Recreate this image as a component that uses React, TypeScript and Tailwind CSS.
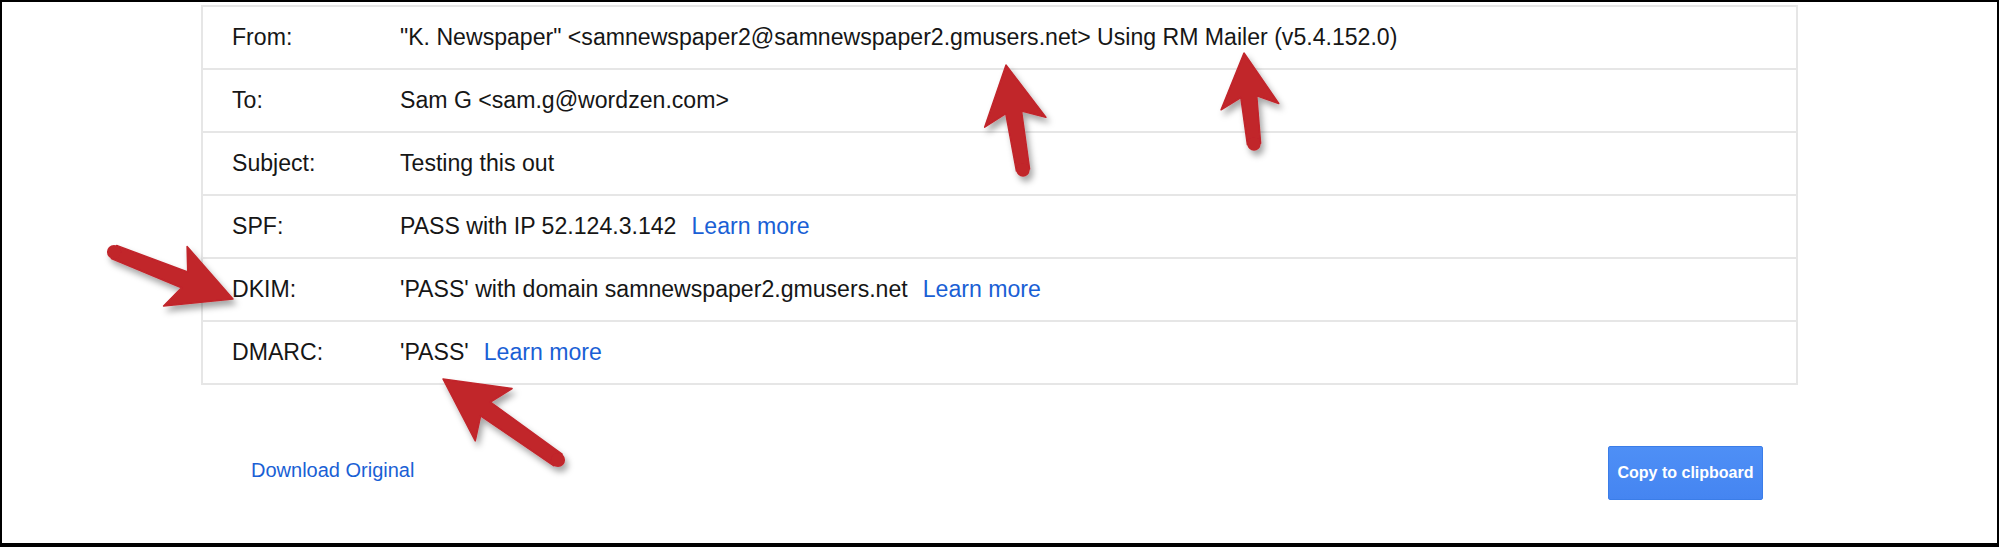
import React from "react";

type Pt = [number, number];

interface ArrowSpec {
  tail: Pt;
  tip: Pt;
  headLen: number;
  headHalf: number;
  shaft: number;
}

// red annotation arrows drawn over the dialog
const arrows: ArrowSpec[] = [
  { tail: [1021, 168], tip: [1004, 63], headLen: 56, headHalf: 31, shaft: 16 },
  { tail: [1252, 142], tip: [1242, 51], headLen: 52, headHalf: 29, shaft: 16 },
  { tail: [112, 250], tip: [231, 297], headLen: 60, headHalf: 32, shaft: 17 },
  { tail: [556, 458], tip: [441, 377], headLen: 60, headHalf: 32, shaft: 17 },
];

function arrowPoints({ tail, tip, headLen, headHalf, shaft }: ArrowSpec) {
  const dx = tip[0] - tail[0];
  const dy = tip[1] - tail[1];
  const len = Math.hypot(dx, dy);
  const ux = dx / len;
  const uy = dy / len;
  const nx = -uy;
  const ny = ux;
  const bx = tip[0] - ux * headLen;
  const by = tip[1] - uy * headLen;
  const inset = 8;
  const cx = bx + ux * inset;
  const cy = by + uy * inset;
  const h = shaft / 2;
  const t = shaft / 2.4;
  const pts: Pt[] = [
    [tail[0] + nx * t, tail[1] + ny * t],
    [cx + nx * h, cy + ny * h],
    [bx - ux * 2 + nx * headHalf, by - uy * 2 + ny * headHalf],
    tip,
    [bx - ux * 2 - nx * headHalf, by - uy * 2 - ny * headHalf],
    [cx - nx * h, cy - ny * h],
    [tail[0] - nx * t, tail[1] - ny * t],
  ];
  return { pts: pts.map((p) => p.join(",")).join(" "), r: t };
}

function Arrows() {
  return (
    <svg
      className="pointer-events-none absolute left-0 top-0"
      width={1999}
      height={547}
      viewBox="0 0 1999 547"
    >
      <defs>
        <filter id="arrowShadow" x="-20%" y="-20%" width="140%" height="140%">
          <feDropShadow dx="3" dy="5" stdDeviation="3" floodColor="#000" floodOpacity="0.35" />
        </filter>
      </defs>
      {arrows.map((a, i) => {
        const { pts, r } = arrowPoints(a);
        return (
          <g key={i} filter="url(#arrowShadow)" fill="#c1252b">
            <polygon points={pts} strokeLinejoin="round" stroke="#c1252b" strokeWidth={1.5} />
            <circle cx={a.tail[0]} cy={a.tail[1]} r={r} />
          </g>
        );
      })}
    </svg>
  );
}

const rows: { label: string; value: React.ReactNode }[] = [
  {
    label: "From:",
    value: (
      <>"K. Newspaper" &lt;samnewspaper2@samnewspaper2.gmusers.net&gt; Using RM Mailer (v5.4.152.0)</>
    ),
  },
  { label: "To:", value: <>Sam G &lt;sam.g@wordzen.com&gt;</> },
  { label: "Subject:", value: <>Testing this out</> },
  {
    label: "SPF:",
    value: (
      <>
        PASS with IP 52.124.3.142
        <a className="ml-[15px] text-[#1a5fd5]">Learn more</a>
      </>
    ),
  },
  {
    label: "DKIM:",
    value: (
      <>
        'PASS' with domain samnewspaper2.gmusers.net
        <a className="ml-[15px] text-[#1a5fd5]">Learn more</a>
      </>
    ),
  },
  {
    label: "DMARC:",
    value: (
      <>
        'PASS'
        <a className="ml-[15px] text-[#1a5fd5]">Learn more</a>
      </>
    ),
  },
];

export default function App() {
  return (
    <div
      className="relative h-[547px] w-[1999px] overflow-hidden border-x-2 border-t-2 border-b-4 border-black bg-white text-[#161616]"
      style={{ fontFamily: '"Liberation Sans", Arial, sans-serif' }}
    >
      <div className="ml-[199px] mt-[3px] w-[1597px] border-x-2 border-t-2 border-[#e6e6e6]">
        {rows.map((r) => (
          <div
            key={r.label}
            className="flex h-[63px] items-center border-b-2 border-[#e6e6e6] text-[23.1px]"
          >
            <div className="w-[197px] shrink-0 pl-[29px]">{r.label}</div>
            <div className="flex items-center whitespace-nowrap">{r.value}</div>
          </div>
        ))}
      </div>

      <div className="mt-[61px] flex items-center justify-between pl-[249px] pr-[234px]">
        <a className="mb-[6px] text-[20px] text-[#1a5fd5]">Download Original</a>
        <button className="h-[54px] w-[155px] rounded-[2px] border border-[#3b7de8] bg-gradient-to-b from-[#4e8ff6] to-[#4585f1] text-[16px] font-bold text-white">
          Copy to clipboard
        </button>
      </div>

      <Arrows />
    </div>
  );
}
